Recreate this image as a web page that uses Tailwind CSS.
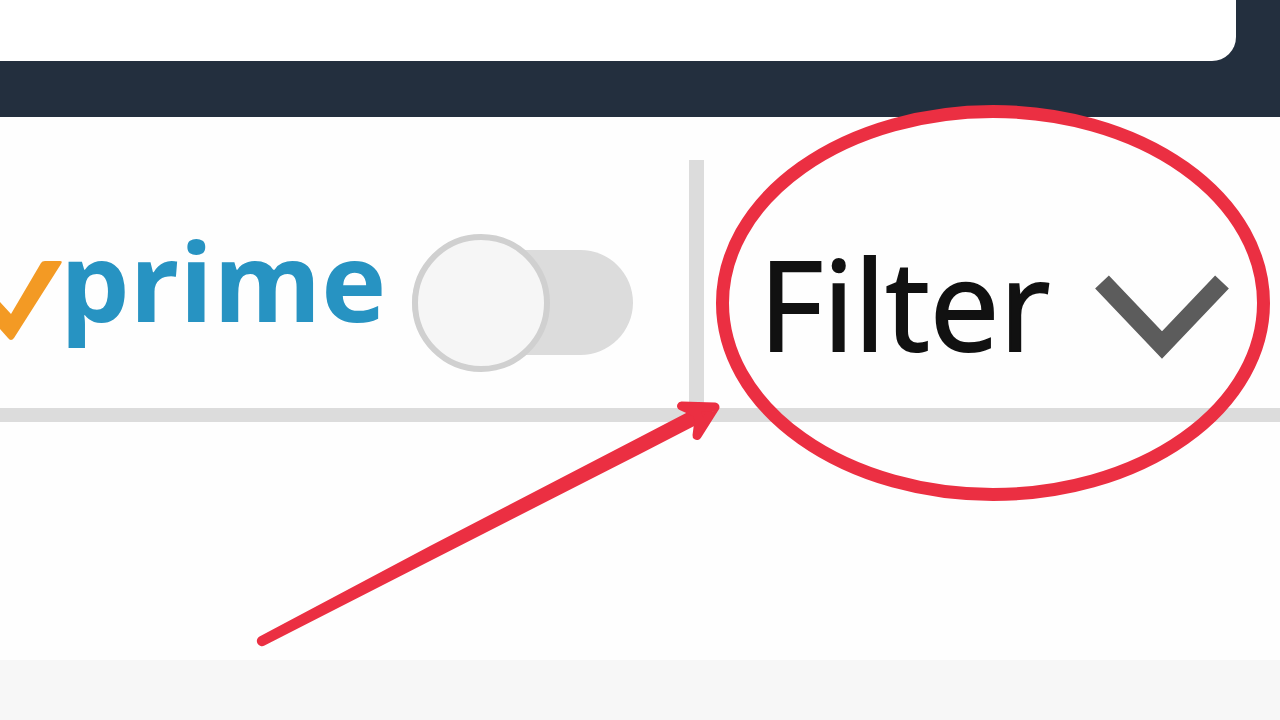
<!DOCTYPE html>
<html lang="en">
<head>
    <meta charset="UTF-8">
    <meta name="viewport" content="width=device-width, initial-scale=1.0">
    <title>Filter</title>
    <script src="https://cdn.jsdelivr.net/npm/@tailwindcss/browser@4"></script>
</head>
<body class="relative min-h-screen flex flex-col overflow-hidden bg-[#fefefe] font-['Open_Sans',sans-serif]">
    <header class="h-[117px] bg-[#232f3e] pr-11">
        <input type="search" aria-label="Search" class="block w-full h-[61px] px-6 bg-white rounded-br-3xl outline-none">
    </header>

    <div class="flex h-[305px] border-b-14 border-[#dcdcdc]">
        <label for="prime" class="flex items-center shrink-0 w-[689px] pt-20 cursor-pointer">
            <svg class="w-15 h-[86px] mb-3 shrink-0 overflow-visible" viewBox="0 0 60 86" aria-hidden="true">
                <path d="M-10 36 L0 48 L11 60 L41 9 Q42 7 45 7 H60 Q63 7 61 10 L14 84 Q11 88 8 84 L0 75 L-10 64Z" fill="#f39a24"/>
            </svg>
            <span class="w-[352px] pb-12 text-[110px] leading-[140px] font-bold text-[#2793c2]">prime</span>
            <input type="checkbox" id="prime" class="peer sr-only">
            <span class="relative flex items-center w-[221px] h-[138px]">
                <span class="w-full h-[105px] rounded-full bg-[#dcdcdc]"></span>
                <span class="absolute left-0 size-[138px] rounded-full border-6 border-[#d0d0d0] bg-[#f6f6f6]"></span>
            </span>
        </label>

        <div class="w-[15px] mt-[43px] shrink-0 bg-[#dcdcdc]"></div>

        <button type="button" class="flex flex-1 items-center gap-11 pt-20 pl-[55px] text-[124px] leading-[140px] [-webkit-text-stroke:2px_#111111] text-[#111111] cursor-pointer">
            Filter
            <svg class="w-[136px] h-[88px] mt-7 shrink-0" viewBox="0 0 136 88" fill="none" stroke="#5c5c5c" stroke-width="19" aria-hidden="true">
                <path d="M8 9 L68 72 L128 9"/>
            </svg>
        </button>
    </div>

    <main class="h-[238px]"></main>
    <footer class="flex-1 bg-[#f7f7f7]"></footer>

    <!-- red circle and arrow over the page -->
    <svg class="absolute top-0 left-0 w-[1280px] h-[720px] pointer-events-none" viewBox="0 0 1280 720" aria-hidden="true">
        <ellipse cx="993" cy="303" rx="270.5" ry="191.5" fill="none" stroke="#eb2f42" stroke-width="13"/>
        <path d="M259.5 636.5 L430 546 L640 437 L688 412 L704 408 L702 422 L640 454 L430 561 L264.5 645.5 A5 5 0 0 1 259.5 636.5Z" fill="#eb2f42"/>
        <path d="M681.5 406 L715 407 L697 435.5 L699 420 L697 413 Z" fill="#eb2f42" stroke="#eb2f42" stroke-width="9" stroke-linejoin="round"/>
    </svg>
</body>
</html>
